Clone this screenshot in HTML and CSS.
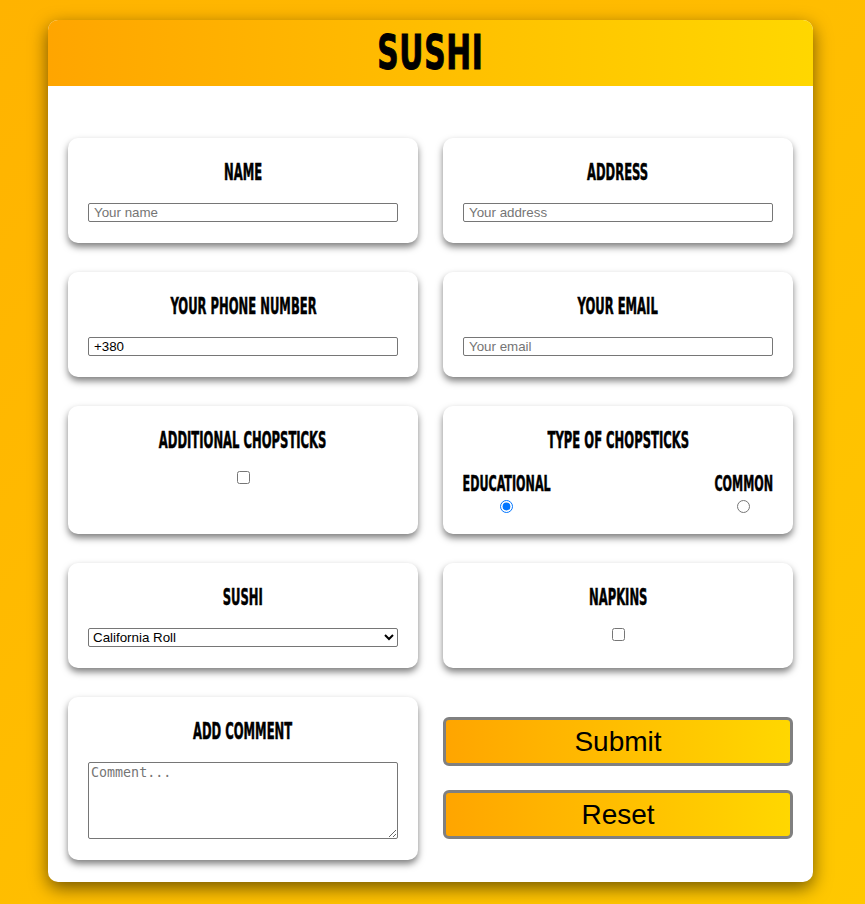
FILE: index.html
```html
<!DOCTYPE html>
<html lang="en">
<head>
<meta charset="UTF-8">
<meta name="viewport" content="width=device-width, initial-scale=1.0">
<title>Sushi</title>
<link rel="stylesheet" href="styles.css">
</head>
<body>
<div class="container">
    <div class="header"><span class="header-title">Sushi</span></div>
    <form class="order-form">
        <div class="card">
            <h3 class="card-title"><span>Name</span></h3>
            <input type="text" class="field" placeholder="Your name">
        </div>
        <div class="card">
            <h3 class="card-title"><span>Address</span></h3>
            <input type="text" class="field" placeholder="Your address">
        </div>
        <div class="card">
            <h3 class="card-title"><span>Your phone number</span></h3>
            <input type="tel" class="field" value="+380">
        </div>
        <div class="card">
            <h3 class="card-title"><span>Your email</span></h3>
            <input type="email" class="field" placeholder="Your email">
        </div>
        <div class="card">
            <h3 class="card-title"><span>Additional chopsticks</span></h3>
            <input type="checkbox" class="check">
        </div>
        <div class="card">
            <h3 class="card-title"><span>Type of chopsticks</span></h3>
            <div class="radio-row">
                <label class="radio-option">
                    <span class="radio-label">Educational</span>
                    <input type="radio" name="chopsticks" checked>
                </label>
                <label class="radio-option">
                    <span class="radio-label">Common</span>
                    <input type="radio" name="chopsticks">
                </label>
            </div>
        </div>
        <div class="card">
            <h3 class="card-title"><span>Sushi</span></h3>
            <select class="field select-field">
                <option>California Roll</option>
                <option>Philadelphia</option>
                <option>Unagi Maki</option>
            </select>
        </div>
        <div class="card">
            <h3 class="card-title"><span>Napkins</span></h3>
            <input type="checkbox" class="check">
        </div>
        <div class="card">
            <h3 class="card-title"><span>Add comment</span></h3>
            <textarea class="comment" placeholder="Comment..."></textarea>
        </div>
        <div class="buttons">
            <button type="submit" class="button">Submit</button>
            <button type="reset" class="button">Reset</button>
        </div>
    </form>
</div>
</body>
</html>
```
FILE: styles.css
```css
body {
    margin: 0;
    padding: 20px 4px 22px 0;
    font-family: "Liberation Sans", Arial, sans-serif;
    background: linear-gradient(to bottom right, #ffb300, #ffc800);
    min-height: 100vh;
    box-sizing: border-box;
}

.container {
    width: 765px;
    margin: 0 auto;
    background-color: #ffffff;
    border-radius: 10px;
    box-shadow: 0 6px 18px rgba(0, 0, 0, 0.55);
    overflow: hidden;
}

.header {
    height: 66px;
    background: linear-gradient(to right, #ffa500, #ffd700);
    display: flex;
    justify-content: center;
    align-items: center;
}

/* no Bebas here, so a squeezed condensed bold stands in */
.header-title,
.card-title span,
.radio-label {
    display: inline-block;
    font-family: "DejaVu Sans Condensed", "DejaVu Sans", sans-serif;
    font-weight: bold;
    text-transform: uppercase;
    color: #000000;
    -webkit-text-stroke: 0.5px #000000;
}

.header-title {
    font-size: 50px;
    line-height: 1;
    transform: scale(0.66, 0.95);
    letter-spacing: 1px;
    -webkit-text-stroke: 1px #000000;
}

.order-form {
    display: grid;
    grid-template-columns: 350px 350px;
    column-gap: 25px;
    row-gap: 29px;
    padding: 52px 20px 22px 20px;
}

.card {
    background-color: #ffffff;
    border-radius: 10px;
    box-shadow: 0 4px 7px rgba(0, 0, 0, 0.5);
    padding: 20px 20px 21px 20px;
    display: flex;
    flex-direction: column;
    align-items: center;
}

.card-title {
    margin: 0 0 16px 0;
    height: 29px;
    line-height: 29px;
    text-align: center;
}

.card-title span {
    font-size: 23px;
    transform: scaleX(0.56);
}

.field {
    width: 100%;
    height: 19px;
    box-sizing: border-box;
    border: 1px solid #767676;
    border-radius: 2px;
    padding: 0 5px;
    font-family: "Liberation Sans", Arial, sans-serif;
    font-size: 13.33px;
    color: #000000;
}

.field::placeholder {
    color: #757575;
}

.select-field {
    padding: 0;
    background-color: #ffffff;
}

.check {
    width: 13px;
    height: 13px;
    margin: 0;
}

.radio-row {
    width: 100%;
    display: flex;
    justify-content: space-between;
}

.radio-option {
    display: flex;
    flex-direction: column;
    align-items: center;
}

.radio-option:first-child {
    margin-left: -31px;
}

.radio-option:last-child {
    margin-right: -20px;
}

.radio-label {
    font-size: 21px;
    line-height: 27px;
    transform: scaleX(0.59);
}

.radio-option input {
    margin: 2px 0 0 0;
}

.comment {
    width: 100%;
    height: 77px;
    box-sizing: border-box;
    border: 1px solid #767676;
    border-radius: 2px;
    padding: 2px;
    font-family: "DejaVu Sans Mono", monospace;
    font-size: 13.33px;
}

.buttons {
    display: flex;
    flex-direction: column;
    gap: 24px;
    padding: 20px 0 21px 0;
}

.button {
    height: 49px;
    border: 3px solid #808080;
    border-radius: 6px;
    background: linear-gradient(to right, #ffa500, #ffd700);
    font-family: "Liberation Sans", Arial, sans-serif;
    font-size: 28px;
    color: #000000;
    cursor: pointer;
}
```
